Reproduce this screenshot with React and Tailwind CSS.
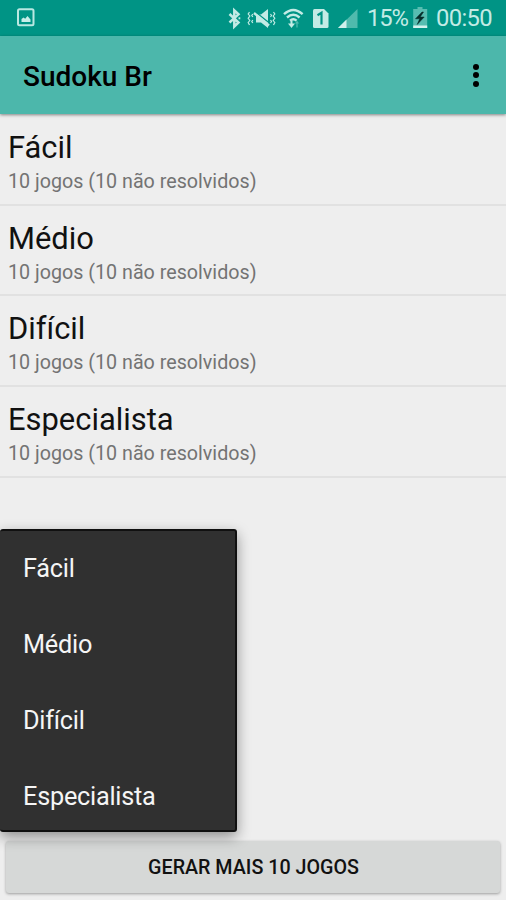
const LEVELS = ['Fácil', 'Médio', 'Difícil', 'Especialista'];

function StatusIcons() {
  return (
    <svg width="131" height="24" viewBox="228 5 131 24" fill="none" stroke="#c3ebe5" className="ml-auto shrink-0">
      <path d="M229.500 13l9 8.500-4.200 4V9.300l4.200 4-9 8.200" strokeWidth="2.500" />
      <path d="M238.500 17.300h1.800" strokeWidth="2" />
      <path d="M249.500 11l-1.300 2 1.600 2-1.600 2.300 1.600 2.200-1.600 2 1.300 2.500M252.800 13l-1 1.500 1 1.500M252.800 19l-1 1.500 1 1.500" strokeWidth="1.200" />
      <path d="M273.500 11l1.300 2-1.600 2 1.600 2.300-1.600 2.200 1.600 2-1.300 2.500M270.500 13l1 1.500-1 1.500M270.500 19l1 1.500-1 1.500" strokeWidth="1.200" />
      <path d="M256 13.500h5l7-5.500v19l-7-5.500h-5z" fill="#c3ebe5" stroke="none" />
      <path d="M255.500 11L270 22.500" stroke="#009485" strokeWidth="1.400" />
      <path d="M254 12L269 24.500" strokeWidth="2.300" />
      <path d="M284 13.200q9.300-8.500 18.600 0M287 16.500q6.300-5.500 12.600 0M290 19.600q3.300-2.800 6.600 0" strokeWidth="2.400" />
      <path d="M291.500 19.500v5" strokeWidth="2" />
      <path d="M288 22.500h7l-3.500 4.500z" fill="#c3ebe5" stroke="none" />
      <path d="M297 26.500v-5" stroke="#4db9ac" strokeWidth="1.300" />
      <path d="M295 22.500l2-3 2 3z" fill="#4db9ac" stroke="none" />
      <path d="M314.500 8h9.500l4.500 4.500v13q0 1.500-1.500 1.500h-12.500q-1.500 0-1.500-1.500v-16q0-1.500 1.500-1.500z" fill="#c3ebe5" stroke="none" />
      <path d="M317.500 14.200l4-2.400v11.700" stroke="#009485" strokeWidth="2.200" />
      <path d="M357.500 8v19H338z" fill="#50baad" stroke="none" />
      <path d="M346.500 18.500V27H338z" fill="#d0f0ec" stroke="none" />
    </svg>
  );
}

function BatteryIcon() {
  return (
    <svg width="16" height="24" viewBox="412 5 16 24" className="ml-[5px] shrink-0">
      <path d="M417.500 6h5v2h4.700v19h-14V8h4.300z" fill="#58bdb1" />
      <path d="M413.200 24.500h14V27h-14z" fill="#d5f2ee" />
      <path d="M422 11l-6.500 6.800h4.200l-2.500 5.700 7-7.500h-4l3.300-5z" fill="#062c29" stroke="#062c29" strokeWidth="0.500" />
    </svg>
  );
}

export default function App() {
  return (
    <div className="relative flex h-[900px] w-[506px] flex-col overflow-hidden bg-[#eeeeee] font-[Roboto,sans-serif] text-black">
      <div className="flex h-9 shrink-0 items-center bg-[#009485] pr-[14px] pl-[17px] text-[#c3ebe5]">
        <svg width="18" height="20" viewBox="0 0 18 20" className="shrink-0">
          <rect x="1" y="1.200" width="15.500" height="16" rx="1.500" fill="none" stroke="#b9e8e2" strokeWidth="2" />
          <path d="M4.500 14v-3l2-1.500 1.700 1.200L10.500 8l3 3.500V14z" fill="#c8eee9" />
        </svg>
        <StatusIcons />
        <span className="ml-[8px] w-[40px] text-[23.800px] leading-[34px] tracking-[-1.100px]">15%</span>
        <BatteryIcon />
        <span className="ml-[8px] w-[56px] text-[23.800px] leading-[34px] tracking-[-0.650px]">00:50</span>
      </div>
      <header className="z-10 flex h-[78px] shrink-0 items-center justify-between bg-[#4cb7ab] pr-[27px] pl-[23px] shadow-[0_1px_3px_rgba(0,0,0,0.45)]">
        <h1 className="pt-[3px] text-[28px] leading-8 font-medium">Sudoku Br</h1>
        <div className="flex flex-col gap-[2.500px]">
          <i className="size-[6px] rounded-full bg-black" />
          <i className="size-[6px] rounded-full bg-black" />
          <i className="size-[6px] rounded-full bg-black" />
        </div>
      </header>
      <main className="flex-1 pt-px">
        {LEVELS.map((level) => (
          <div key={level} className="h-[90.700px] border-b-2 border-[#e1e1e1] pt-[15px] pl-2">
            <p className="text-[30.900px] leading-[36px] text-[#111111]">{level}</p>
            <p className="text-[19.700px] leading-[32px] text-[#737373]">10 jogos (10 não resolvidos)</p>
          </div>
        ))}
      </main>
      <button className="mx-[6px] mb-[7px] h-[52px] shrink-0 rounded-[3px] bg-[#d6d8d7] pt-px pl-px text-[19.700px] font-medium text-[#111111] shadow-[0_1px_3px_rgba(0,0,0,0.35)]">
        GERAR MAIS 10 JOGOS
      </button>
      <div className="absolute top-[529px] left-0 flex h-[303px] w-[237px] flex-col rounded-[3px] border-2 border-l-0 border-[#101010] bg-[#303030] shadow-[0_5px_14px_rgba(0,0,0,0.4)]">
        {LEVELS.map((level) => (
          <div key={level} className="flex h-[76px] shrink-0 items-center pl-[23px] text-[25.300px] tracking-[-0.250px] text-[#f5f5f5]">
            {level}
          </div>
        ))}
      </div>
    </div>
  );
}
